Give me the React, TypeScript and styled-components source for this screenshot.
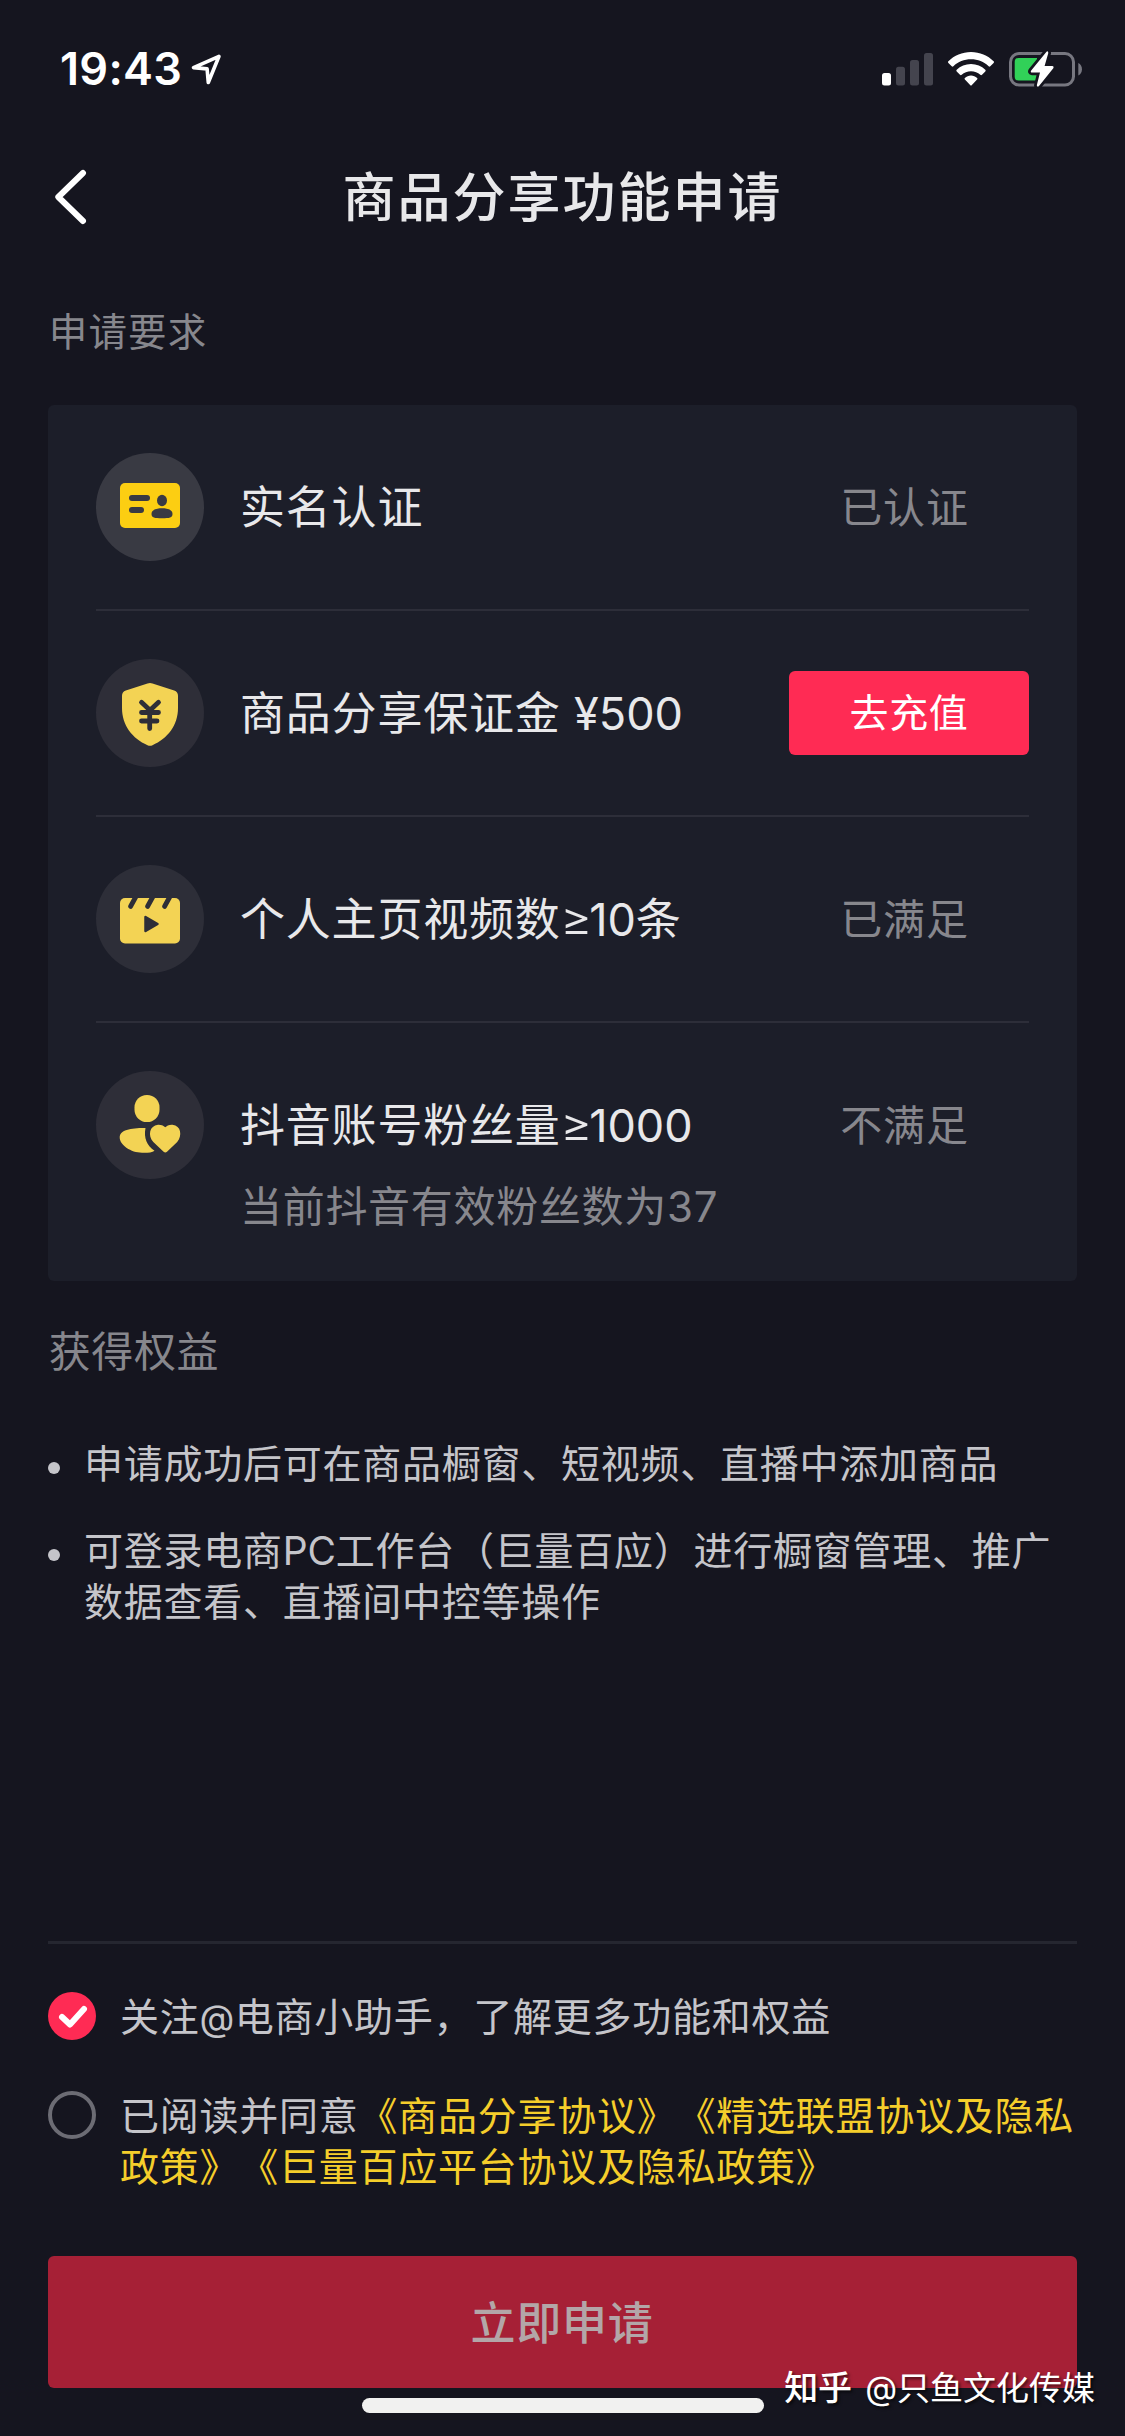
import React from "react";
import styled, { createGlobalStyle } from "styled-components";

const GlobalStyle = createGlobalStyle`
  * { box-sizing: border-box; }
  html, body { margin: 0; padding: 0; background: #15151f; }
  body {
    font-family: Inter, "Noto Sans CJK SC", sans-serif;
    text-spacing-trim: space-all;
    -webkit-font-smoothing: antialiased;
  }
  h1, h2, p, ul { margin: 0; padding: 0; font-weight: 400; }
  button { font-family: inherit; border: 0; padding: 0; }
`;

const Screen = styled.main`
  position: relative;
  width: 1125px;
  height: 2436px;
  display: flex;
  flex-direction: column;
  overflow: hidden;
  background: #15151f;
`;

const StatusBar = styled.header`
  height: 132px;
  padding: 6px 43px 0 60px;
  display: flex;
  align-items: center;
  justify-content: space-between;
`;

const ClockGroup = styled.div`
  display: flex;
  align-items: center;
  gap: 9px;
  color: #fff;
`;

const Clock = styled.span`
  font-size: 45px;
  line-height: 54px;
  font-weight: 600;
  letter-spacing: 0.3px;
`;

const Indicators = styled.div`
  display: flex;
  align-items: center;
  gap: 15px;
`;

const NavBar = styled.nav`
  height: 132px;
  padding: 0 54px 2px;
  display: grid;
  grid-template-columns: 34px 1fr 34px;
  align-items: center;
`;

const NavTitle = styled.h1`
  padding-top: 1px;
  font-size: 53px;
  line-height: 60px;
  letter-spacing: 2px;
  font-weight: 500;
  text-align: center;
  color: #e8e8ea;
`;

const Content = styled.div`
  flex: 1;
  padding: 0 48px;
  display: flex;
  flex-direction: column;
`;

const SectionTitle = styled.h2<{ $size: number; $tracking: number; $top: number }>`
  margin-top: ${(p) => p.$top}px;
  padding-left: 0.7px;
  font-size: ${(p) => p.$size}px;
  letter-spacing: ${(p) => p.$tracking}px;
  line-height: 54px;
  color: #87878d;
`;

const Card = styled.section`
  margin-top: 46px;
  height: 876px;
  padding: 0 48px;
  border-radius: 6px;
  background: #1c1e29;
`;

const Requirement = styled.div<{ $divided: boolean }>`
  padding: 48px 0;
  display: grid;
  grid-template-columns: 108px 1fr 240px;
  column-gap: 36px;
  align-items: center;
  border-bottom: ${(p) => (p.$divided ? "2px solid #2d2e39" : "0")};
`;

const IconDisc = styled.div<{ $tone: string }>`
  width: 108px;
  height: 108px;
  border-radius: 50%;
  background: ${(p) => p.$tone};
`;

const RequirementName = styled.span`
  padding-top: 2px;
  font-size: 45px;
  line-height: 60px;
  letter-spacing: 0.8px;
  white-space: nowrap;
  color: #e8e8ea;
`;

const Latin = styled.span<{ $tracking: number; $size?: number; $weight?: number }>`
  letter-spacing: ${(p) => p.$tracking}px;
  font-size: ${(p) => (p.$size ? `${p.$size}px` : "inherit")};
  font-weight: ${(p) => p.$weight ?? "inherit"};
  line-height: 1;
`;

const RequirementState = styled.span`
  padding: 2px 9px 0 0;
  font-size: 42px;
  line-height: 60px;
  letter-spacing: 0.9px;
  text-align: center;
  color: #87878d;
`;

const RequirementNote = styled.p`
  margin-top: -2px;
  grid-column: 2 / -1;
  font-size: 42px;
  line-height: 60px;
  letter-spacing: 0.7px;
  color: #87878d;
`;

const TopUpButton = styled.button`
  height: 84px;
  border-radius: 6px;
  background: #ff2b54;
  color: #fff;
  font-size: 39px;
  line-height: 54px;
  letter-spacing: 0.6px;
`;

const Benefits = styled.ul`
  margin-top: 59px;
  display: flex;
  flex-direction: column;
  gap: 36px;
  list-style: none;
`;

const Benefit = styled.li`
  display: grid;
  grid-template-columns: 12px 1fr;
  column-gap: 24px;
  font-size: 39px;
  line-height: 51px;
  letter-spacing: 0.75px;
  color: #c5c5ca;
`;

const Bullet = styled.i`
  width: 12px;
  height: 12px;
  margin-top: 24px;
  border-radius: 50%;
  background: #c5c5ca;
`;

const Footer = styled.footer`
  height: 495px;
  padding: 0 48px;
  display: flex;
  flex-direction: column;
`;

const Rule = styled.hr`
  width: 100%;
  height: 3px;
  margin: 0;
  border: 0;
  background: #252630;
`;

const Consent = styled.div`
  margin-top: 48px;
  display: grid;
  grid-template-columns: 48px 1fr;
  column-gap: 24px;
  color: #c5c5ca;
`;

const ConsentText = styled.p`
  margin: -1px 0 1px;
  font-size: 39px;
  line-height: 51px;
  letter-spacing: 0.75px;
`;

const Checkbox = styled.span<{ $checked?: boolean }>`
  width: 48px;
  height: 48px;
  border-radius: 50%;
  border: ${(p) => (p.$checked ? "0" : "4px solid #6c6c74")};
  background: ${(p) => (p.$checked ? "#ff2b54" : "transparent")};
`;

const Agreement = styled.a`
  color: #f5ce2b;
`;

const ApplyButton = styled.button`
  margin-top: 63px;
  height: 132px;
  padding: 0 1px 3px 0;
  flex: none;
  border-radius: 6px;
  background: #a62036;
  color: #b3a6a8;
  font-size: 45px;
  font-weight: 500;
  letter-spacing: 0.7px;
`;

const HomeIndicator = styled.div`
  width: 402px;
  height: 15px;
  margin: 10px auto 0;
  border-radius: 8px;
  background: #f1f1f0;
`;

const Watermark = styled.div`
  position: absolute;
  right: 30px;
  bottom: 24px;
  display: flex;
  align-items: center;
  gap: 13px;
  font-size: 33px;
  line-height: 48px;
  color: #fff;
  text-shadow: 2px 2px 3px rgba(0, 0, 0, 0.6);
`;

const WatermarkBrand = styled.b`
  font-weight: 500;
  font-size: 34px;
`;

const LocationArrow = () => (
  <svg width="31" height="33" viewBox="0 0 31 33" fill="none">
    <path d="M28 3.300L2.500 14.600l13.600 1.300 1.200 13.600z" stroke="#fff" strokeWidth="3.600" strokeLinejoin="round" />
  </svg>
);

const Signal = () => (
  <svg width="51" height="36" viewBox="0 0 51 36">
    <rect x="0" y="22" width="9" height="12.500" rx="2.500" fill="#fff" />
    <rect x="14" y="15.700" width="9" height="18.800" rx="2.500" fill="#44444e" />
    <rect x="28" y="9" width="9" height="25.500" rx="2.500" fill="#44444e" />
    <rect x="42" y="2" width="9" height="32.500" rx="2.500" fill="#44444e" />
  </svg>
);

const Wifi = () => (
  <svg width="46" height="36" viewBox="0 -1 46 36" fill="#fff">
    <path d="M23 0C14.200 0 6.200 3.500.4 9.200a1.200 1.200 0 0 0 0 1.700l3.300 3.300a1.200 1.200 0 0 0 1.700 0C10 9.900 16.200 7.300 23 7.300s13 2.600 17.600 6.900a1.200 1.200 0 0 0 1.700 0l3.300-3.300a1.200 1.200 0 0 0 0-1.700C39.800 3.500 31.800 0 23 0z" />
    <path d="M23 12c-5.500 0-10.600 2.200-14.300 5.700a1.200 1.200 0 0 0 0 1.700l3.300 3.300a1.200 1.200 0 0 0 1.700 0c2.500-2.200 5.700-3.500 9.300-3.500s6.800 1.300 9.300 3.500a1.200 1.200 0 0 0 1.700 0l3.300-3.300a1.200 1.200 0 0 0 0-1.700C33.600 14.200 28.500 12 23 12z" />
    <path d="M23 23.500c-2.300 0-4.500.9-6.100 2.400a1.200 1.200 0 0 0 0 1.700l5.200 5.300a1.200 1.200 0 0 0 1.800 0l5.200-5.300a1.200 1.200 0 0 0 0-1.700c-1.600-1.500-3.800-2.400-6.100-2.400z" />
  </svg>
);

const Battery = () => (
  <svg width="73" height="38" viewBox="0 0 73 38">
    <rect x="1.500" y="3.500" width="63" height="31.500" rx="8.500" fill="none" stroke="#777780" strokeWidth="3" />
    <path d="M69.300 13v12.500c2.300-1 3.700-3.300 3.700-6.200s-1.400-5.300-3.700-6.300z" fill="#777780" />
    <path d="M9.500 8H28v22.500H9.500a3.800 3.800 0 0 1-3.800-3.800V11.800A3.800 3.800 0 0 1 9.500 8z" fill="#31d158" />
    <path
      d="M37.500 1.800L22.200 20.400Q21 22.300 23.200 22.500H31l-3.200 12.800Q28.300 37.600 30 36L44.300 18.200Q45.300 16.200 43.200 16H35.600L39.300 3Q39.200.5 37.500 1.800z"
      fill="#fff"
      stroke="#15151f"
      strokeWidth="5.500"
      strokeLinejoin="round"
      paintOrder="stroke"
    />
  </svg>
);

const BackChevron = () => (
  <svg width="34" height="56" viewBox="0 0 34 56" fill="none">
    <path d="M29 4L4.300 28 29 52" stroke="#fff" strokeWidth="6" strokeLinecap="round" strokeLinejoin="round" />
  </svg>
);

const IdCardIcon = () => (
  <svg viewBox="0 0 108 108">
    <rect x="24" y="30" width="60" height="45" rx="5" fill="#fcce12" />
    <g fill="#393a43">
      <rect x="33" y="42" width="21" height="6" rx="3" />
      <rect x="33" y="54" width="15" height="6" rx="3" />
      <ellipse cx="66" cy="47.500" rx="5" ry="5.800" />
      <path d="M55.500 61c0-4 4.500-5.700 10.500-5.700S76.500 57 76.500 61s-3 4.200-10.500 4.200S55.500 65 55.500 61z" />
    </g>
  </svg>
);

const ShieldIcon = () => (
  <svg viewBox="0 0 108 108">
    <path d="M51.500 24.400a7 7 0 0 1 5 0l21.700 7.200a5.500 5.500 0 0 1 3.800 5.200V49c0 17.500-10.500 30.500-25.500 37.200a6 6 0 0 1-5 0C36.500 79.500 26 66.500 26 49V36.800a5.500 5.500 0 0 1 3.800-5.200z" fill="#f3d354" />
    <path d="M45.500 43.300l8.500 8 8.500-8M45.500 53.500h17M45.500 62h15.500M53.700 52v17.500" fill="none" stroke="#2e2e38" strokeWidth="4.800" strokeLinecap="round" strokeLinejoin="round" />
  </svg>
);

const ClapperIcon = () => (
  <svg viewBox="0 0 108 108">
    <rect x="24" y="33" width="60" height="45.500" rx="5" fill="#f3d354" />
    <path d="M40 31.500l-5.500 10M57 31.500l-5.500 10M74 31.500l-5.500 10" stroke="#2d2e38" strokeWidth="4.800" strokeLinecap="round" />
    <path d="M49.500 52v14l12-7z" fill="#2d2e38" stroke="#2d2e38" strokeWidth="2.500" strokeLinejoin="round" />
  </svg>
);

const FansIcon = () => (
  <svg viewBox="0 0 108 108">
    <rect x="38.500" y="24" width="25" height="27" rx="12.300" fill="#f3d354" />
    <path d="M49.500 57C39 57 23.700 57.500 23.700 66.500c0 7.500 11.300 15.200 22.300 15.200 5 0 10 .2 12.500-2C51 75 47.500 67 49.500 57z" fill="#f3d354" />
    <path d="M67.600 80.800L57.300 71C51.500 64.500 53.500 54.500 62 53.700c3.500-.2 6 1.300 7.300 2.600 1.200-1.300 3.700-2.800 7.200-2.600C85 54.500 86.500 64.500 81.200 71L71 80.800q-1.700 1.400-3.400 0z" fill="#f3d354" />
  </svg>
);

const CheckMark = () => (
  <svg viewBox="0 0 48 48" fill="none">
    <path d="M14 25l8 7.500L36 17" stroke="#fff" strokeWidth="6" strokeLinecap="round" strokeLinejoin="round" />
  </svg>
);

const AtLeast = ({ count }: { count: number }) => (
  <>
    <Latin $tracking={-3.5} $size={49} $weight={300}>≥</Latin>
    <Latin $tracking={0}>{count}</Latin>
  </>
);

const requirements = [
  { key: "identity", icon: <IdCardIcon />, tone: "#393a43", name: "实名认证", state: "已认证" },
  {
    key: "deposit",
    icon: <ShieldIcon />,
    tone: "#2e2e38",
    name: <>商品分享保证金 <Latin $tracking={0}>¥500</Latin></>,
    action: "去充值",
  },
  {
    key: "videos",
    icon: <ClapperIcon />,
    tone: "#2d2e38",
    name: <>个人主页视频数<AtLeast count={10} />条</>,
    state: "已满足",
  },
  {
    key: "fans",
    icon: <FansIcon />,
    tone: "#2e2e38",
    name: <>抖音账号粉丝量<AtLeast count={1000} /></>,
    state: "不满足",
    note: "当前抖音有效粉丝数为37",
  },
];

const benefits = [
  { key: "listing", text: "申请成功后可在商品橱窗、短视频、直播中添加商品" },
  {
    key: "workbench",
    text: <>可登录电商<Latin $tracking={-0.2}>PC</Latin>工作台（巨量百应）进行橱窗管理、推广数据查看、直播间中控等操作</>,
  },
];

export default function App() {
  return (
    <>
      <GlobalStyle />
      <Screen>
        <StatusBar>
          <ClockGroup>
            <Clock>19:43</Clock>
            <LocationArrow />
          </ClockGroup>
          <Indicators>
            <Signal />
            <Wifi />
            <Battery />
          </Indicators>
        </StatusBar>
        <NavBar>
          <BackChevron />
          <NavTitle>商品分享功能申请</NavTitle>
        </NavBar>
        <Content>
          <SectionTitle $size={38.5} $tracking={1.2} $top={41}>申请要求</SectionTitle>
          <Card>
            {requirements.map((item, index) => (
              <Requirement key={item.key} $divided={index < requirements.length - 1}>
                <IconDisc $tone={item.tone}>{item.icon}</IconDisc>
                <RequirementName>{item.name}</RequirementName>
                {item.action ? (
                  <TopUpButton>{item.action}</TopUpButton>
                ) : (
                  <RequirementState>{item.state}</RequirementState>
                )}
                {item.note && <RequirementNote>{item.note}</RequirementNote>}
              </Requirement>
            ))}
          </Card>
          <SectionTitle $size={42} $tracking={0.6} $top={44}>获得权益</SectionTitle>
          <Benefits>
            {benefits.map((item) => (
              <Benefit key={item.key}>
                <Bullet />
                <span>{item.text}</span>
              </Benefit>
            ))}
          </Benefits>
        </Content>
        <Footer>
          <Rule />
          <Consent>
            <Checkbox $checked>
              <CheckMark />
            </Checkbox>
            <ConsentText>
              关注<Latin $tracking={0.5} $size={36}>@</Latin>电商小助手，了解更多功能和权益
            </ConsentText>
          </Consent>
          <Consent>
            <Checkbox />
            <ConsentText>
              已阅读并同意
              <Agreement>《商品分享协议》《精选联盟协议及隐私政策》《巨量百应平台协议及隐私政策》</Agreement>
            </ConsentText>
          </Consent>
          <ApplyButton>立即申请</ApplyButton>
          <HomeIndicator />
        </Footer>
        <Watermark>
          <WatermarkBrand>知乎</WatermarkBrand>
          <span>@只鱼文化传媒</span>
        </Watermark>
      </Screen>
    </>
  );
}
